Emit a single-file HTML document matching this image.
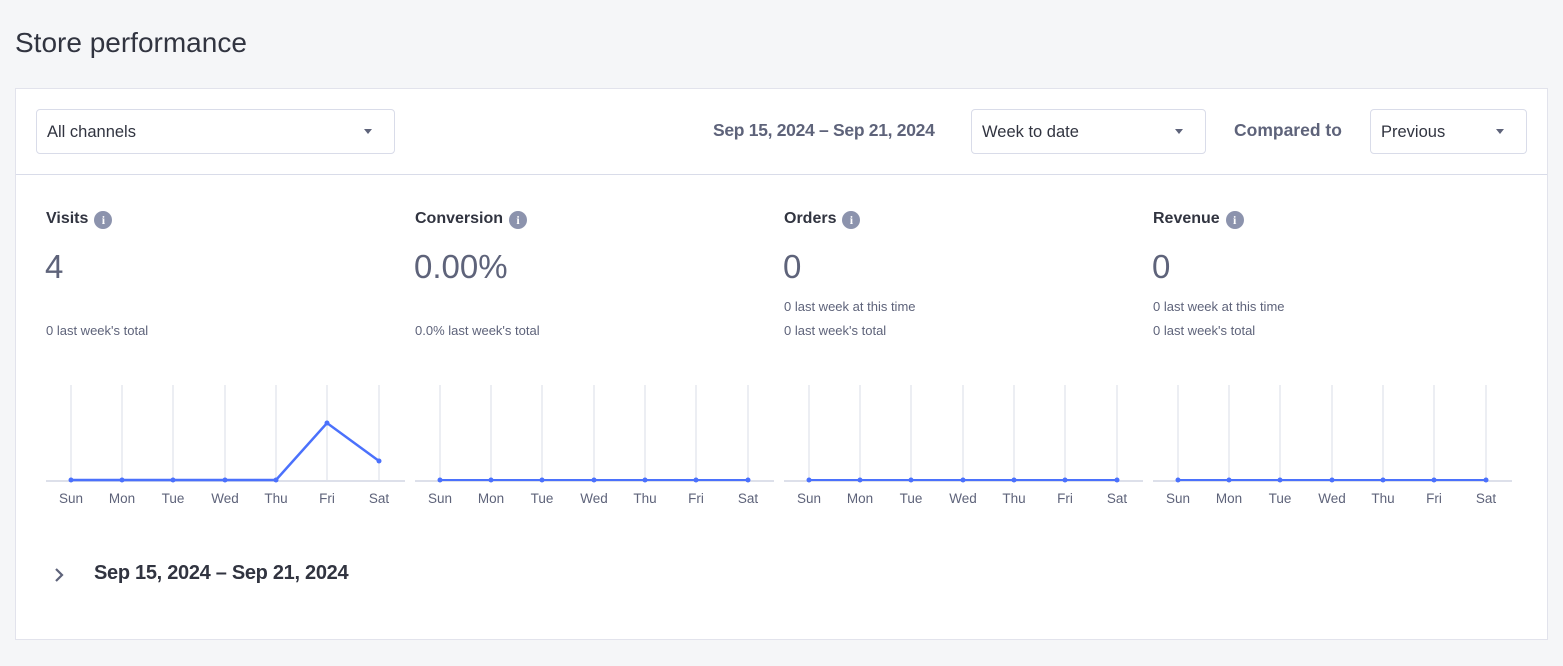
<!DOCTYPE html>
<html><head><meta charset="utf-8"><style>
*{margin:0;padding:0;box-sizing:border-box}
body{width:1563px;height:666px;background:#f5f6f8;font-family:"Liberation Sans",sans-serif;position:relative;overflow:hidden;color:#313440}
.a{position:absolute;white-space:nowrap}
.card{position:absolute;left:15px;top:88px;width:1533px;height:552px;background:#fff;border:1px solid #e2e3ec}
.dd{position:absolute;top:109px;height:45px;border:1px solid #d9dce9;border-radius:4px;background:#fff;font-size:16.5px;color:#313440;padding:13px 10px}
.dd i{position:absolute;right:22px;top:19px;width:0;height:0;border-left:4.5px solid transparent;border-right:4.5px solid transparent;border-top:5px solid #5e637a}
.h{font-size:16px;font-weight:bold;color:#313440;top:210px}
.h b{display:inline-block;width:18px;height:18px;border-radius:50%;background:#8c93ad;color:#fff;font-size:12px;text-align:center;line-height:18px;vertical-align:-1px;margin-left:6px;font-family:"Liberation Serif",serif}
.v{font-size:33px;font-weight:300;color:#5e637a;top:248px}
.s{font-size:13px;color:#5e637a}
</style></head><body>
<div class="a" style="left:15px;top:27px;font-size:28px;color:#313440">Store performance</div>
<div class="card"></div>
<div class="a" style="left:16px;top:174px;width:1531px;height:1px;background:#d9dce9"></div>
<div class="dd" style="left:36px;width:359px">All channels<i></i></div>
<div class="a" style="left:713px;top:120px;font-size:17.5px;font-weight:bold;color:#5e637a;letter-spacing:-0.3px">Sep 15, 2024 – Sep 21, 2024</div>
<div class="dd" style="left:971px;width:235px">Week to date<i></i></div>
<div class="a" style="left:1234px;top:120px;font-size:17.5px;font-weight:bold;color:#5e637a">Compared to</div>
<div class="dd" style="left:1370px;width:157px">Previous<i></i></div>

<div class="a h" style="left:46px">Visits<b>i</b></div>
<div class="a v" style="left:45px">4</div>
<div class="a s" style="left:46px;top:323px">0 last week's total</div>

<div class="a h" style="left:415px">Conversion<b>i</b></div>
<div class="a v" style="left:414px">0.00%</div>
<div class="a s" style="left:415px;top:323px">0.0% last week's total</div>

<div class="a h" style="left:784px">Orders<b>i</b></div>
<div class="a v" style="left:783px">0</div>
<div class="a s" style="left:784px;top:299px">0 last week at this time</div>
<div class="a s" style="left:784px;top:323px">0 last week's total</div>

<div class="a h" style="left:1153px">Revenue<b>i</b></div>
<div class="a v" style="left:1152px">0</div>
<div class="a s" style="left:1153px;top:299px">0 last week at this time</div>
<div class="a s" style="left:1153px;top:323px">0 last week's total</div>

<svg class="a" style="left:0;top:0" width="1563" height="666" font-family="Liberation Sans, sans-serif" font-size="13.5" fill="#5e637a">
<g id="c0">
<g stroke="#e6e8ef" stroke-width="1.5">
<line x1="71" y1="385" x2="71" y2="482"/><line x1="122" y1="385" x2="122" y2="482"/><line x1="173" y1="385" x2="173" y2="482"/><line x1="225" y1="385" x2="225" y2="482"/><line x1="276" y1="385" x2="276" y2="482"/><line x1="327" y1="385" x2="327" y2="482"/><line x1="379" y1="385" x2="379" y2="482"/>
</g>
<line x1="46" y1="481" x2="405" y2="481" stroke="#dde0ea" stroke-width="2"/>
<g text-anchor="middle"><text x="71" y="503">Sun</text><text x="122" y="503">Mon</text><text x="173" y="503">Tue</text><text x="225" y="503">Wed</text><text x="276" y="503">Thu</text><text x="327" y="503">Fri</text><text x="379" y="503">Sat</text></g>
</g>
<use href="#c0" x="369"/><use href="#c0" x="738"/><use href="#c0" x="1107"/>
<polyline points="71,480 276,480 327,423 379,461" fill="none" stroke="#4b71fc" stroke-width="2.5"/>
<g fill="#4b71fc"><circle cx="71" cy="480" r="2.5"/><circle cx="122" cy="480" r="2.5"/><circle cx="173" cy="480" r="2.5"/><circle cx="225" cy="480" r="2.5"/><circle cx="276" cy="480" r="2.5"/><circle cx="327" cy="423" r="2.5"/><circle cx="379" cy="461" r="2.5"/></g>
<g id="f"><line x1="440" y1="480" x2="748" y2="480" stroke="#4b71fc" stroke-width="2"/>
<g fill="#4b71fc"><circle cx="440" cy="480" r="2.5"/><circle cx="491" cy="480" r="2.5"/><circle cx="542" cy="480" r="2.5"/><circle cx="594" cy="480" r="2.5"/><circle cx="645" cy="480" r="2.5"/><circle cx="696" cy="480" r="2.5"/><circle cx="748" cy="480" r="2.5"/></g></g>
<use href="#f" x="369"/><use href="#f" x="738"/>
<path d="M56 569 L62 575 L56 581" fill="none" stroke="#5e637a" stroke-width="2.2"/>
</svg>
<div class="a" style="left:94px;top:562px;font-size:20px;font-weight:bold;color:#313440;letter-spacing:-0.3px">Sep 15, 2024 – Sep 21, 2024</div>
</body></html>
